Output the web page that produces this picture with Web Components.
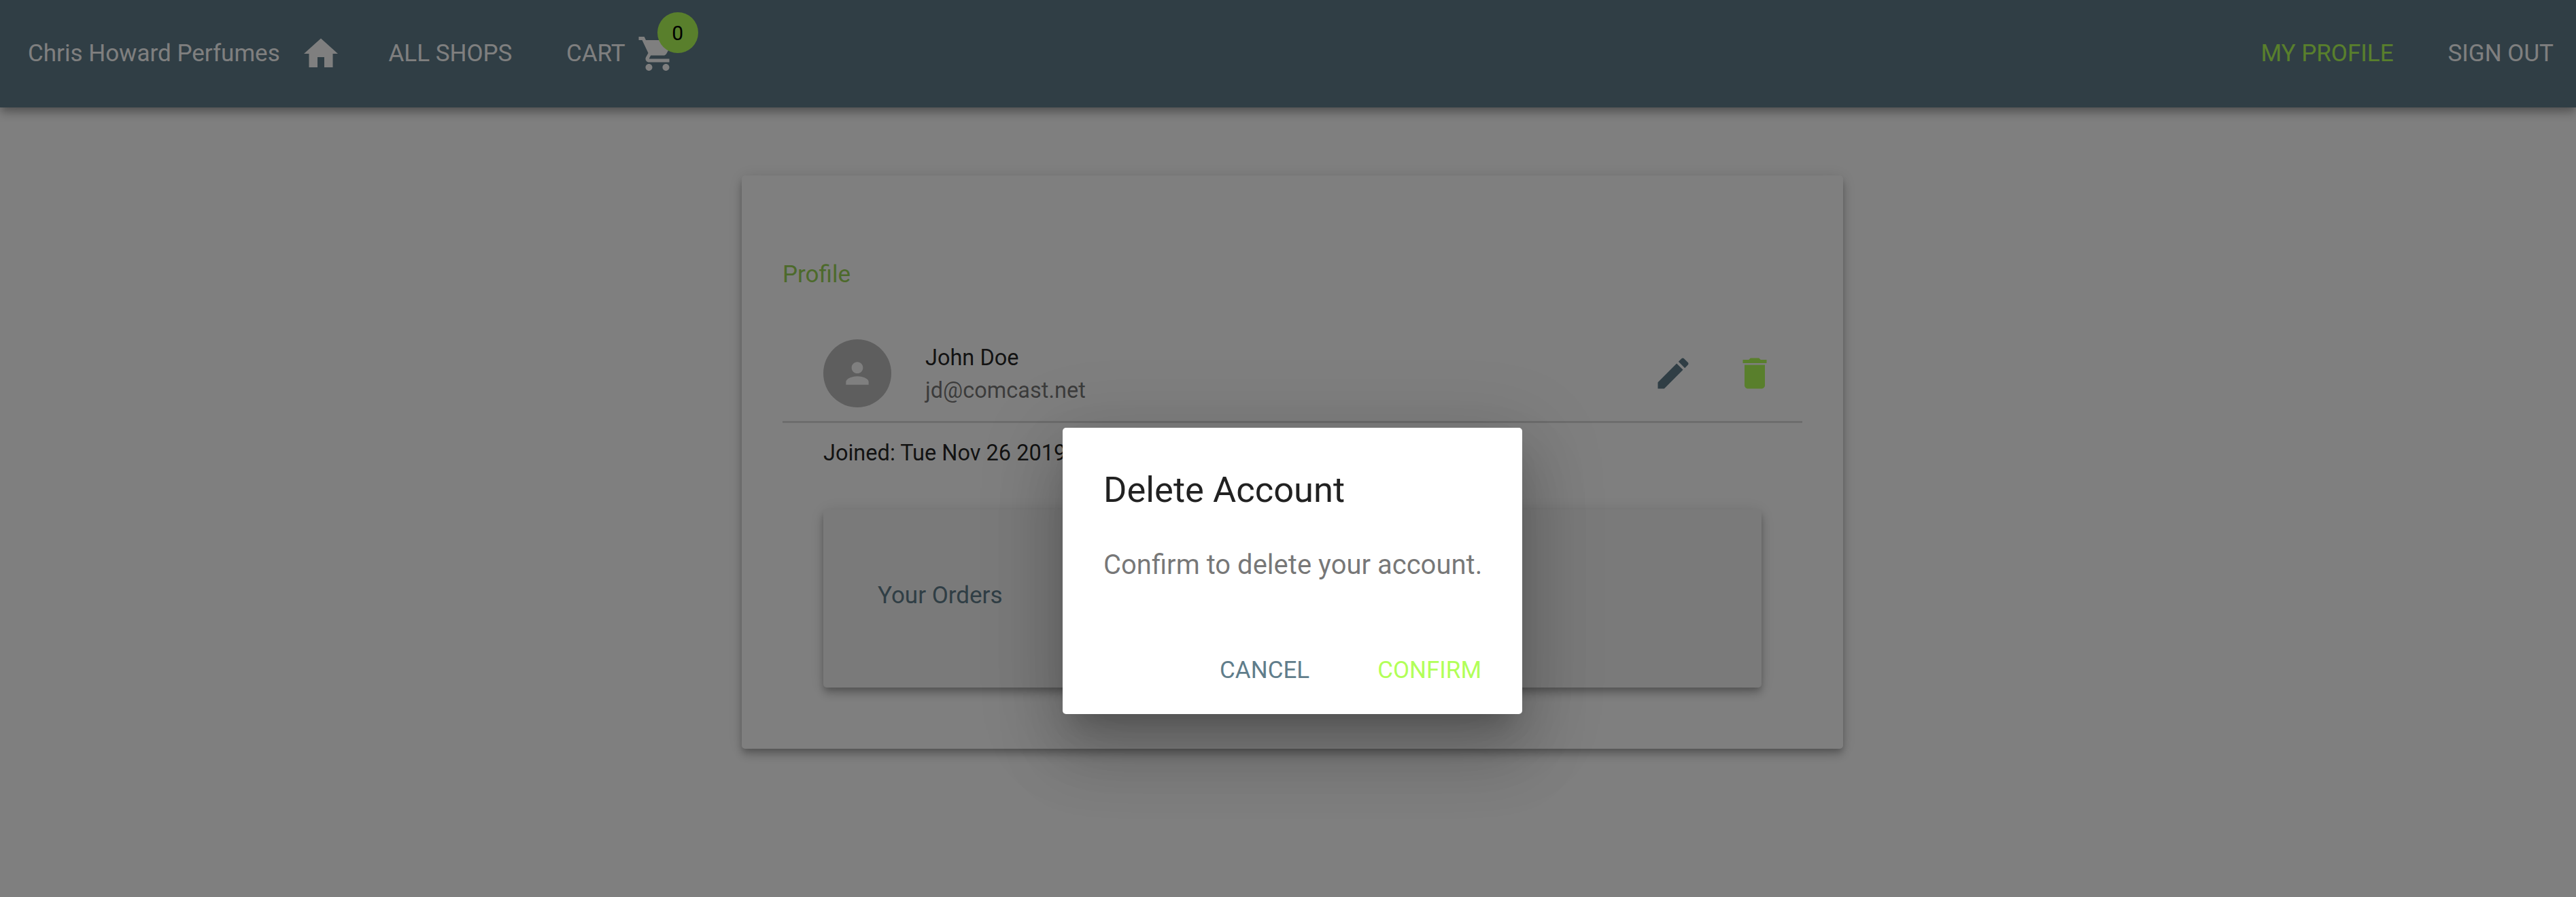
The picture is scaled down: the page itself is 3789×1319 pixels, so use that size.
<!DOCTYPE html>
<html lang="en">
<head>
<meta charset="utf-8">
<title>Chris Howard Perfumes</title>
<style>
html,body{margin:0;padding:0;background:#fff;height:100%;overflow:hidden}
body{font-family:Roboto,"Liberation Sans",sans-serif;font-size:35px;font-weight:400;color:rgba(0,0,0,.87);
--e4:0 5px 10px -2.5px rgba(0,0,0,.2),0 10px 12.5px 0 rgba(0,0,0,.14),0 2.5px 25px 0 rgba(0,0,0,.12);
--e24:0 27.5px 37.5px -17.5px rgba(0,0,0,.2),0 60px 95px 7.5px rgba(0,0,0,.14),0 22.5px 115px 20px rgba(0,0,0,.12)}
</style>
</head>
<body>
<perfume-app></perfume-app>
<script>
const define = (name, html) => customElements.define(name, class extends HTMLElement {
  constructor() {
    super();
    const t = document.createElement('template');
    t.innerHTML = html;
    this.attachShadow({ mode: 'open' }).append(t.content.cloneNode(true));
  }
});

const icons = {
  home: 'M10 20v-6h4v6h5v-8h3L12 3 2 12h3v8z',
  cart: 'M7 18c-1.1 0-1.99.9-1.99 2S5.9 22 7 22s2-.9 2-2-.9-2-2-2zM1 2v2h2l3.6 7.59-1.35 2.45c-.16.28-.25.61-.25.96 0 1.1.9 2 2 2h12v-2H7.42c-.14 0-.25-.11-.25-.25l.03-.12.9-1.63h7.45c.75 0 1.41-.41 1.75-1.03l3.58-6.49c.08-.14.12-.31.12-.48 0-.55-.45-1-1-1H5.21l-.94-2H1zm16 16c-1.1 0-1.99.9-1.99 2s.89 2 1.99 2 2-.9 2-2-.9-2-2-2z',
  person: 'M12 12c2.21 0 4-1.79 4-4s-1.79-4-4-4-4 1.79-4 4 1.79 4 4 4zm0 2c-2.67 0-8 1.34-8 4v2h16v-2c0-2.66-5.33-4-8-4z',
  edit: 'M3 17.25V21h3.75L17.81 9.94l-3.75-3.75L3 17.25zM20.71 7.04c.39-.39.39-1.02 0-1.41l-2.34-2.34c-.39-.39-1.02-.39-1.41 0l-1.83 1.83 3.75 3.75 1.83-1.83z',
  delete: 'M6 19c0 1.1.9 2 2 2h8c1.1 0 2-.9 2-2V7H6v12zM19 4h-3.5l-1-1h-5l-1 1H5v2h14V4z'
};
customElements.define('md-icon', class extends HTMLElement {
  connectedCallback() {
    if (this.shadowRoot) return;
    this.attachShadow({ mode: 'open' }).innerHTML =
      `<style>:host{display:block;flex:none;width:var(--size,60px);height:var(--size,60px)}svg{display:block;width:100%;height:100%;fill:currentColor}</style>
       <svg viewBox="0 0 24 24"><path d="${icons[this.getAttribute('name')]}"/></svg>`;
  }
});

define('cart-badge', `<style>
:host{display:block;position:relative;flex:none}
.n{position:absolute;left:30px;top:-30.5px;width:60px;height:60px;border-radius:50%;background:#b2ff59;color:#000;
font-size:30px;line-height:61px;text-align:center}
</style><md-icon name="cart"></md-icon><span class="n"><slot></slot></span>`);

define('nav-link', `<style>
:host{display:flex;align-items:center;flex:none;gap:17px;line-height:50px;white-space:nowrap}
</style><slot></slot>`);

define('top-bar', `<style>
:host{display:flex;flex:none;align-items:center;justify-content:space-between;box-sizing:border-box;height:158px;
padding:0 33px 1px 41px;background:#607d8b;color:#fff;box-shadow:var(--e4);position:relative}
.left,.right{display:flex;align-items:center}
.brand{width:401px;line-height:50px;white-space:nowrap}
.shops{margin-left:69.5px;width:261.5px}
.right{gap:80px}
.active{color:#b2ff59}
</style>
<div class="left"><span class="brand">Chris Howard Perfumes</span><md-icon name="home"></md-icon>
<nav-link class="shops">ALL SHOPS</nav-link><nav-link>CART<cart-badge>0</cart-badge></nav-link></div>
<div class="right"><nav-link class="active">MY PROFILE</nav-link><nav-link>SIGN OUT</nav-link></div>`);

define('user-row', `<style>
:host{display:flex;align-items:center;height:140px;padding:0 10px 0 60px;border-bottom:3px solid rgba(0,0,0,.14)}
.av{width:100px;height:100px;border-radius:50%;background:#bdbdbd;color:#fff;display:flex;align-items:center;justify-content:center;--size:50px}
.t{flex:1;margin-left:50px;padding-top:2px;font-size:32.5px;line-height:48px;display:flex;flex-direction:column}
.m{color:rgba(0,0,0,.54)}
.b{width:120px;height:120px;display:flex;align-items:center;justify-content:center}
.edit{color:#607d8b}.del{color:#b2ff59}
</style>
<div class="av"><md-icon name="person"></md-icon></div>
<div class="t"><slot name="name"></slot><span class="m"><slot name="mail"></slot></span></div>
<div class="b edit"><md-icon name="edit"></md-icon></div>
<div class="b del"><md-icon name="delete"></md-icon></div>`);

define('orders-card', `<style>
:host{display:flex;align-items:center;box-sizing:border-box;height:262px;margin:58px 60px 0;padding:0 80px 9px;border-radius:5px;
background:#f5f5f5;color:#607d8b;box-shadow:var(--e4);line-height:50px}
</style><slot></slot>`);

define('profile-card', `<style>
:host{display:block;box-sizing:border-box;width:1620px;height:843px;padding:120px 60px 0;border-radius:5px;background:#fff;box-shadow:var(--e4)}
h2{margin:0;font-size:35px;font-weight:400;line-height:51px;color:#9ad456}
user-row{margin-top:50px}
.j{margin-left:60px;font-size:32.5px;line-height:50px;padding-top:19px;white-space:nowrap}
</style>
<h2>Profile</h2>
<user-row><span slot="name">John Doe</span><span slot="mail">jd@comcast.net</span></user-row>
<div class="j">Joined: Tue Nov 26 2019</div>
<orders-card>Your Orders</orders-card>`);

define('confirm-dialog', `<style>
:host{position:absolute;inset:0;display:flex;align-items:flex-start;justify-content:center;box-sizing:border-box;
padding:629px 0 0 13px;background:rgba(0,0,0,.5)}
.p{box-sizing:border-box;width:676px;height:421px;padding:60px 60px 0;border-radius:5px;background:#fff;box-shadow:var(--e24)}
h1{margin:0;font-size:52.5px;font-weight:400;line-height:62px;white-space:nowrap}
p{margin:49.5px 0 0;font-size:40px;line-height:60px;color:rgba(0,0,0,.54);white-space:nowrap}
.a{display:flex;justify-content:flex-end;gap:100px;margin-top:100px;line-height:50px}
.c{color:#607d8b}.k{color:#b2ff59}
</style>
<div class="p"><h1>Delete Account</h1><p>Confirm to delete your account.</p>
<div class="a"><span class="c">CANCEL</span><span class="k">CONFIRM</span></div></div>`);

define('perfume-app', `<style>
:host{display:flex;flex-direction:column;position:relative;height:1319px;overflow:hidden}
main{display:flex;justify-content:center;padding:100px 0 0 13px}
</style><top-bar></top-bar><main><profile-card></profile-card></main><confirm-dialog></confirm-dialog>`);
</script>
</body>
</html>
